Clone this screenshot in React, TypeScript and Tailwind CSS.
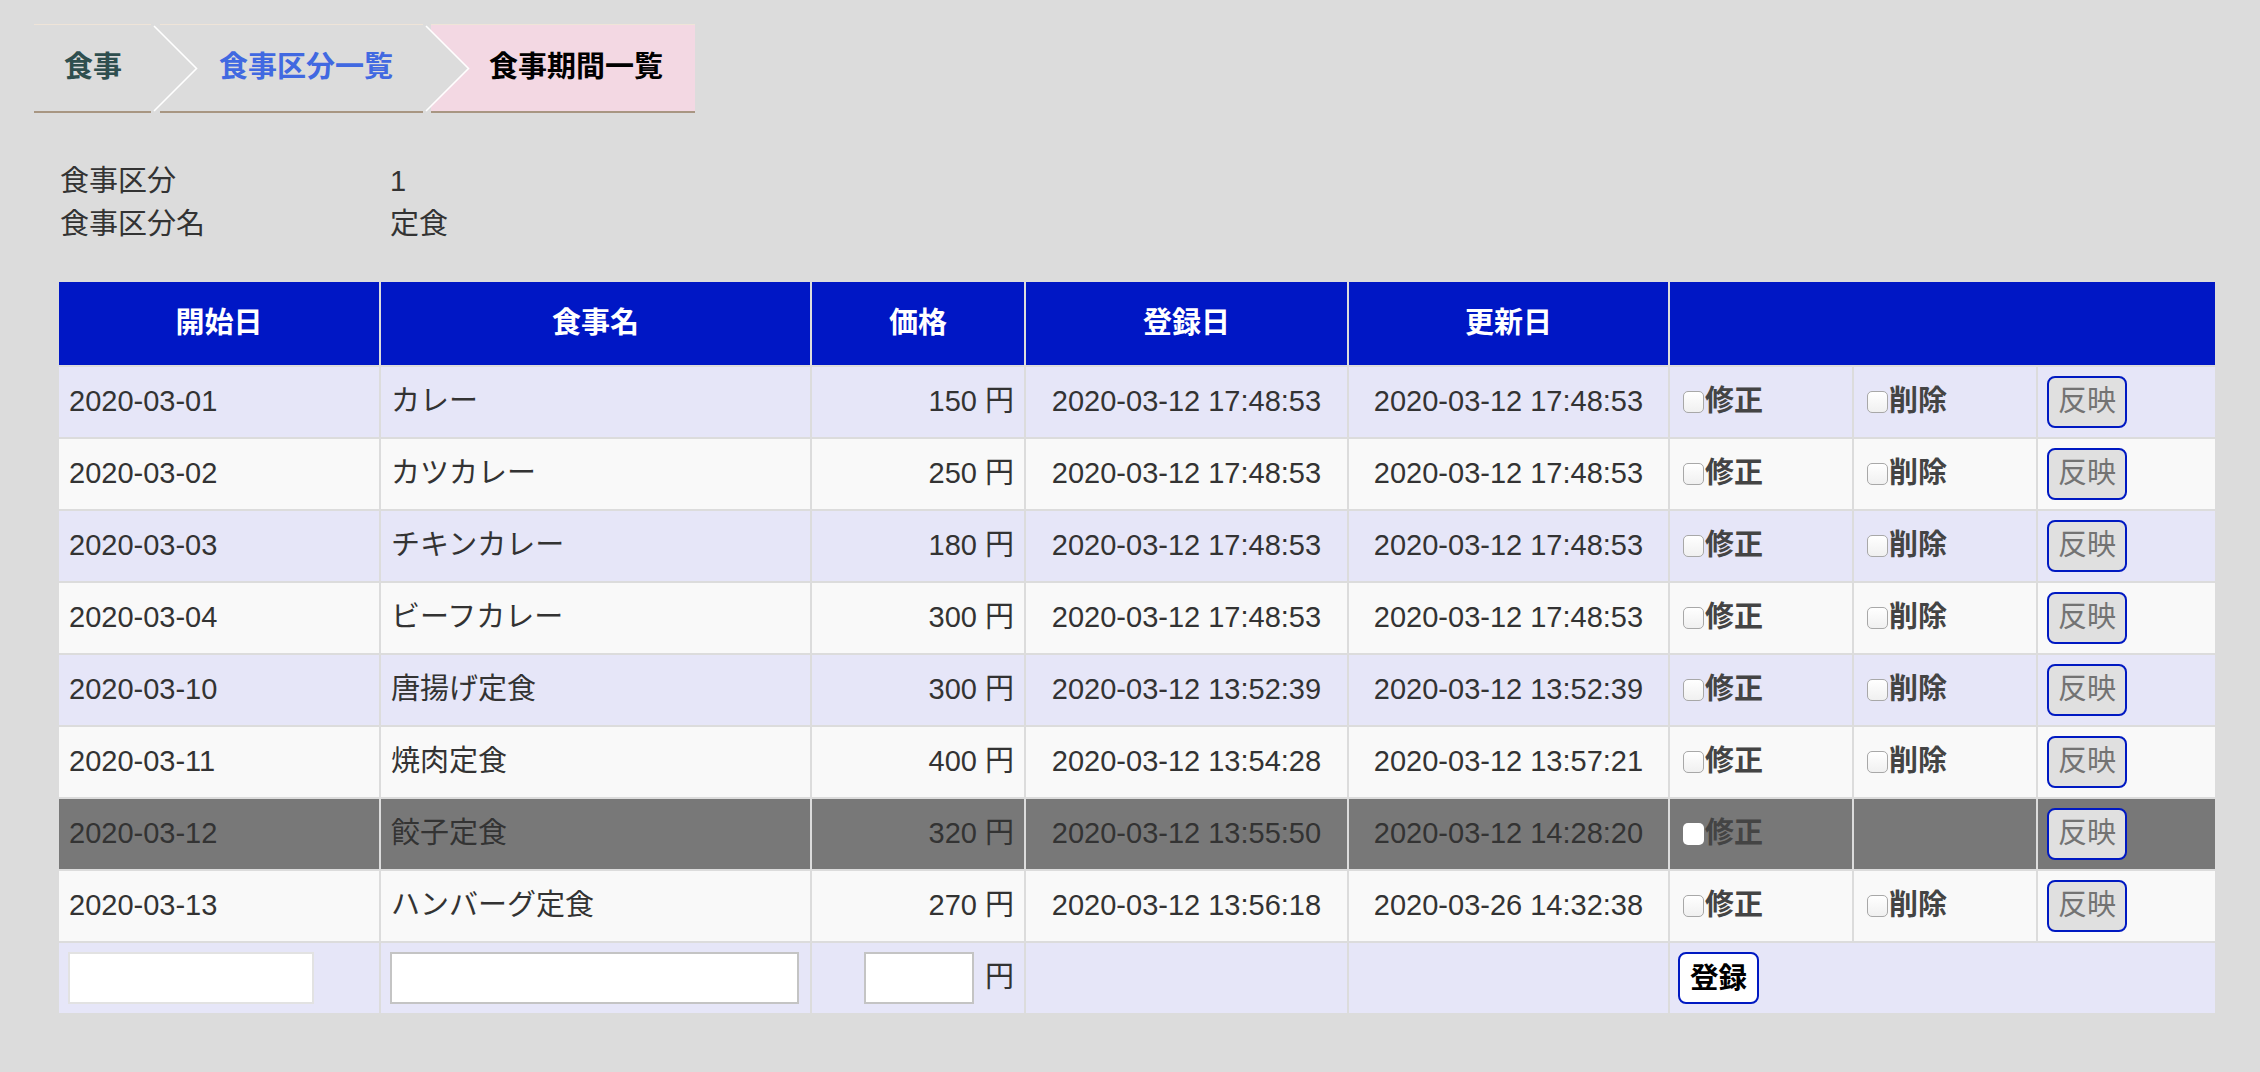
import React from 'react'

// 食事期間一覧 — breadcrumb, category info and the period table.
const FONT = "font-['Liberation_Sans','Noto_Sans_CJK_JP',sans-serif]"

type Row = {
  start: string
  name: string
  price: string
  created: string
  updated: string
  dark?: boolean
  noDelete?: boolean
}

const ROWS: Row[] = [
  { start: '2020-03-01', name: 'カレー', price: '150', created: '2020-03-12 17:48:53', updated: '2020-03-12 17:48:53' },
  { start: '2020-03-02', name: 'カツカレー', price: '250', created: '2020-03-12 17:48:53', updated: '2020-03-12 17:48:53' },
  { start: '2020-03-03', name: 'チキンカレー', price: '180', created: '2020-03-12 17:48:53', updated: '2020-03-12 17:48:53' },
  { start: '2020-03-04', name: 'ビーフカレー', price: '300', created: '2020-03-12 17:48:53', updated: '2020-03-12 17:48:53' },
  { start: '2020-03-10', name: '唐揚げ定食', price: '300', created: '2020-03-12 13:52:39', updated: '2020-03-12 13:52:39' },
  { start: '2020-03-11', name: '焼肉定食', price: '400', created: '2020-03-12 13:54:28', updated: '2020-03-12 13:57:21' },
  { start: '2020-03-12', name: '餃子定食', price: '320', created: '2020-03-12 13:55:50', updated: '2020-03-12 14:28:20', dark: true, noDelete: true },
  { start: '2020-03-13', name: 'ハンバーグ定食', price: '270', created: '2020-03-12 13:56:18', updated: '2020-03-26 14:32:38' },
]

function Breadcrumb() {
  const item = 'flex h-full items-center border-t-[1.5px] border-b-2 border-t-[#efe4d8] border-b-[#a89682] text-[29px] font-bold'
  return (
    <div className="relative ml-[34px] flex h-[89px] w-fit">
      <div className={`${item} w-[117px] pl-[30px] text-[#2f4f4f]`}>食事</div>
      <div className={`${item} ml-[9px] w-[263px] pl-[59px] text-[#4169e1]`}>食事区分一覧</div>
      <div className={`${item} ml-[8px] w-[264px] bg-[#f3d8e3] pl-[58px] text-black`}>食事期間一覧</div>
      <svg className="pointer-events-none absolute left-0 top-0" width="662" height="89" viewBox="0 0 662 89">
        <polyline points="120,2 162.5,44.5 120,87" fill="none" stroke="#ffffff" strokeWidth="1.6" />
        <polygon points="391,1.5 434,44.5 391,87" fill="#dcdcdc" />
        <polyline points="392,2 434.5,44.5 392,87" fill="none" stroke="#ffffff" strokeWidth="1.6" />
      </svg>
    </div>
  )
}

function Check({ dark, label }: { dark?: boolean; label: string }) {
  return (
    <div className="flex items-center pl-[13px] font-bold text-[#444]">
      <span
        className={`mr-px inline-block h-[22px] w-[21px] shrink-0 rounded-[5px] ${
          dark ? 'bg-white' : 'border-[1.5px] border-[#a8a8a8] bg-gradient-to-b from-white to-[#f0f0f0]'
        }`}
      />
      {label}
    </div>
  )
}

function Reflect() {
  return (
    <div className="flex items-center pl-[9px]">
      <button className="h-[52px] w-[80px] rounded-[8px] border-2 border-[#0019c2] bg-[#e0e0e0] text-[29px] text-[#737373]">
        反映
      </button>
    </div>
  )
}

export default function App() {
  const cols = 'grid grid-cols-[320px_429px_212px_321px_319px_182px_182px_177px] gap-[2px]'
  return (
    <div className={`${FONT} min-h-[1072px] w-full bg-[#dcdcdc] pt-[24px] text-[#333]`}>
      <Breadcrumb />

      <div className="ml-[60px] mt-[47px] grid grid-cols-[330px_1fr] text-[29px] leading-[43px]">
        <div>食事区分</div>
        <div>1</div>
        <div>食事区分名</div>
        <div>定食</div>
      </div>

      <div className={`${cols} ml-[59px] mt-[36px] w-[2156px] text-[29px]`}>
        {['開始日', '食事名', '価格', '登録日', '更新日'].map((h) => (
          <div key={h} className="flex h-[83px] items-center justify-center bg-[#0017c5] font-bold text-white">
            {h}
          </div>
        ))}
        <div className="col-span-3 h-[83px] bg-[#0017c5]" />

        {ROWS.map((r, i) => {
          const bg = r.dark ? 'bg-[#787878]' : i % 2 === 0 ? 'bg-[#e6e6f8]' : 'bg-[#f9f9f9]'
          const cell = `${bg} flex h-[70px] items-center`
          return (
            <React.Fragment key={r.start}>
              <div className={`${cell} pl-[10px]`}>{r.start}</div>
              <div className={`${cell} pl-[10px]`}>{r.name}</div>
              <div className={`${cell} justify-end pr-[10px]`}>{r.price} 円</div>
              <div className={`${cell} justify-center`}>{r.created}</div>
              <div className={`${cell} justify-center`}>{r.updated}</div>
              <div className={cell}>
                <Check dark={r.dark} label="修正" />
              </div>
              <div className={cell}>{!r.noDelete && <Check label="削除" />}</div>
              <div className={cell}>
                <Reflect />
              </div>
            </React.Fragment>
          )
        })}

        <div className="flex h-[70px] items-center bg-[#e6e6f8] pl-[9px]">
          <input className="h-[52px] w-[246px] border-2 border-[#e2e2e2] bg-white" />
        </div>
        <div className="flex h-[70px] items-center bg-[#e6e6f8] pl-[9px]">
          <input className="h-[52px] w-[409px] border-2 border-[#c4c4c4] bg-white" />
        </div>
        <div className="flex h-[70px] items-center justify-end bg-[#e6e6f8] pr-[10px]">
          <input className="mr-[11px] h-[52px] w-[110px] border-2 border-[#c4c4c4] bg-white" />円
        </div>
        <div className="h-[70px] bg-[#e6e6f8]" />
        <div className="h-[70px] bg-[#e6e6f8]" />
        <div className="col-span-3 flex h-[70px] items-center bg-[#e6e6f8] pl-[8px]">
          <button className="h-[52px] w-[81px] rounded-[8px] border-2 border-[#0019c2] bg-white text-[28.5px] font-bold text-black">
            登録
          </button>
        </div>
      </div>
    </div>
  )
}
